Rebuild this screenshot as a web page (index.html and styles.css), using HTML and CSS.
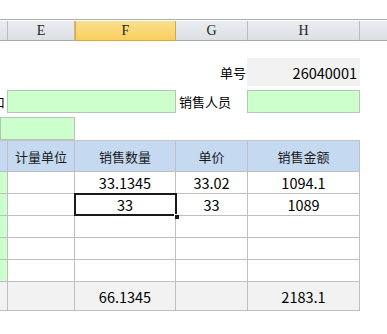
FILE: index.html
```html
<!DOCTYPE html>
<html lang="zh">
<head>
  <meta charset="UTF-8">
  <title>销售单</title>
  <link rel="stylesheet" href="styles.css">
</head>
<body>
  <div class="colbar">
    <div class="ch"></div>
    <div class="ch">E</div>
    <div class="ch active">F</div>
    <div class="ch">G</div>
    <div class="ch">H</div>
    <div class="ch last"></div>
  </div>

  <div class="form">
    <div class="label right g">单号</div>
    <div class="box gray h num">26040001</div>

    <div class="cut">口</div>
    <div class="box green ef"></div>
    <div class="label g">销售人员</div>
    <div class="box green h"></div>

    <div class="box green ae"></div>
  </div>

  <div class="sheet">
    <div class="c head"></div>
    <div class="c head">计量单位</div>
    <div class="c head">销售数量</div>
    <div class="c head">单价</div>
    <div class="c head">销售金额</div>

    <div class="c lead"></div>
    <div class="c"></div>
    <div class="c num">33.1345</div>
    <div class="c num">33.02</div>
    <div class="c num">1094.1</div>

    <div class="c lead"></div>
    <div class="c"></div>
    <div class="c num current">33</div>
    <div class="c num">33</div>
    <div class="c num">1089</div>

    <div class="c lead"></div>
    <div class="c"></div>
    <div class="c"></div>
    <div class="c"></div>
    <div class="c"></div>

    <div class="c lead"></div>
    <div class="c"></div>
    <div class="c"></div>
    <div class="c"></div>
    <div class="c"></div>

    <div class="c lead"></div>
    <div class="c"></div>
    <div class="c"></div>
    <div class="c"></div>
    <div class="c"></div>

    <div class="c total"></div>
    <div class="c total"></div>
    <div class="c total num">66.1345</div>
    <div class="c total"></div>
    <div class="c total num">2183.1</div>
  </div>
</body>
</html>
```

FILE: styles.css
```css
body {
  margin: 0;
  background: #fff;
  color: #000;
  font-family: "Noto Sans CJK SC", "Noto Sans", sans-serif;
  font-size: 13px;
  width: 387px;
  height: 334px;
  overflow: hidden;
}
.colbar {
  margin-top: 19px;
  border-top: 1px solid #a9acb0;
  padding-top: 1px;
  display: grid;
  grid-template-columns: 8px 67px 101px 72px 112px 1fr;
  height: 20px;
}
.ch {
  box-sizing: border-box;
  border-right: 1px solid #b9bdc3;
  border-bottom: 1px solid #a4a9b0;
  background: linear-gradient(#e9ecf0, #dcdfe4);
  display: flex;
  align-items: center;
  justify-content: center;
  font-family: "Liberation Serif", serif;
  font-size: 14px;
  color: #222;
}
.ch.active {
  background: linear-gradient(#f8e08e, #f9cf5c);
  border: 1px solid #e0a53c;
  border-top: none;
  color: #1c1c1c;
}
.ch.last {
  border-right: none;
}
.form {
  display: grid;
  grid-template-columns: 8px 67px 101px 72px 112px 1fr;
  grid-template-rows: 28px 23px 23px;
  row-gap: 4px;
  padding-top: 17px;
  height: 82px;
}
.label {
  display: flex;
  align-items: center;
  padding-left: 3px;
  white-space: nowrap;
}
.label.right {
  justify-content: flex-end;
  padding-right: 2px;
  padding-left: 0;
}
.g { grid-column: 4; }
.h { grid-column: 5; }
.ef { grid-column: 2 / 4; margin-left: -1px; }
.ae { grid-column: 1 / 3; grid-row: 3; }
.box {
  box-sizing: border-box;
}
.box.gray {
  background: #f2f2f2;
  margin-left: -1px;
  display: flex;
  align-items: center;
  justify-content: flex-end;
  padding-right: 3px;
}
.box.green {
  background: #ccffcc;
  border: 1px solid #b4c7b4;
}
.box.green.h {
  margin-left: -1px;
}
/* label of the hidden column, only its tail shows */
.cut {
  grid-column: 1;
  overflow: hidden;
  display: flex;
  justify-content: flex-end;
  align-items: center;
  padding-right: 3px;
  white-space: nowrap;
}
.num {
  font-size: 14.5px;
}
.sheet {
  display: grid;
  grid-template-columns: 8px 67px 101px 72px 112px;
  grid-template-rows: 31px repeat(5, 22px) 29px;
  width: 360px;
  border-top: 1px solid #c3c3c3;
}
.c {
  box-sizing: border-box;
  border-right: 1px solid #bfbfbf;
  border-bottom: 1px solid #bfbfbf;
  display: flex;
  align-items: center;
  justify-content: center;
  white-space: nowrap;
  position: relative;
}
.head {
  background: #c5d9f1;
  color: #1a1a1a;
  font-size: 13px;
}
.lead {
  background: #ccffcc;
}
.total {
  background: #f2f2f2;
}
.current::after {
  content: "";
  position: absolute;
  left: -1px;
  top: -1px;
  width: 103px;
  height: 23px;
  box-sizing: border-box;
  border: 2px solid #1a1a1a;
}
.current::before {
  content: "";
  position: absolute;
  right: -4px;
  bottom: -4px;
  width: 5px;
  height: 5px;
  box-sizing: border-box;
  background: #1a1a1a;
  border-top: 1px solid #fff;
  border-left: 1px solid #fff;
  z-index: 1;
}
```
